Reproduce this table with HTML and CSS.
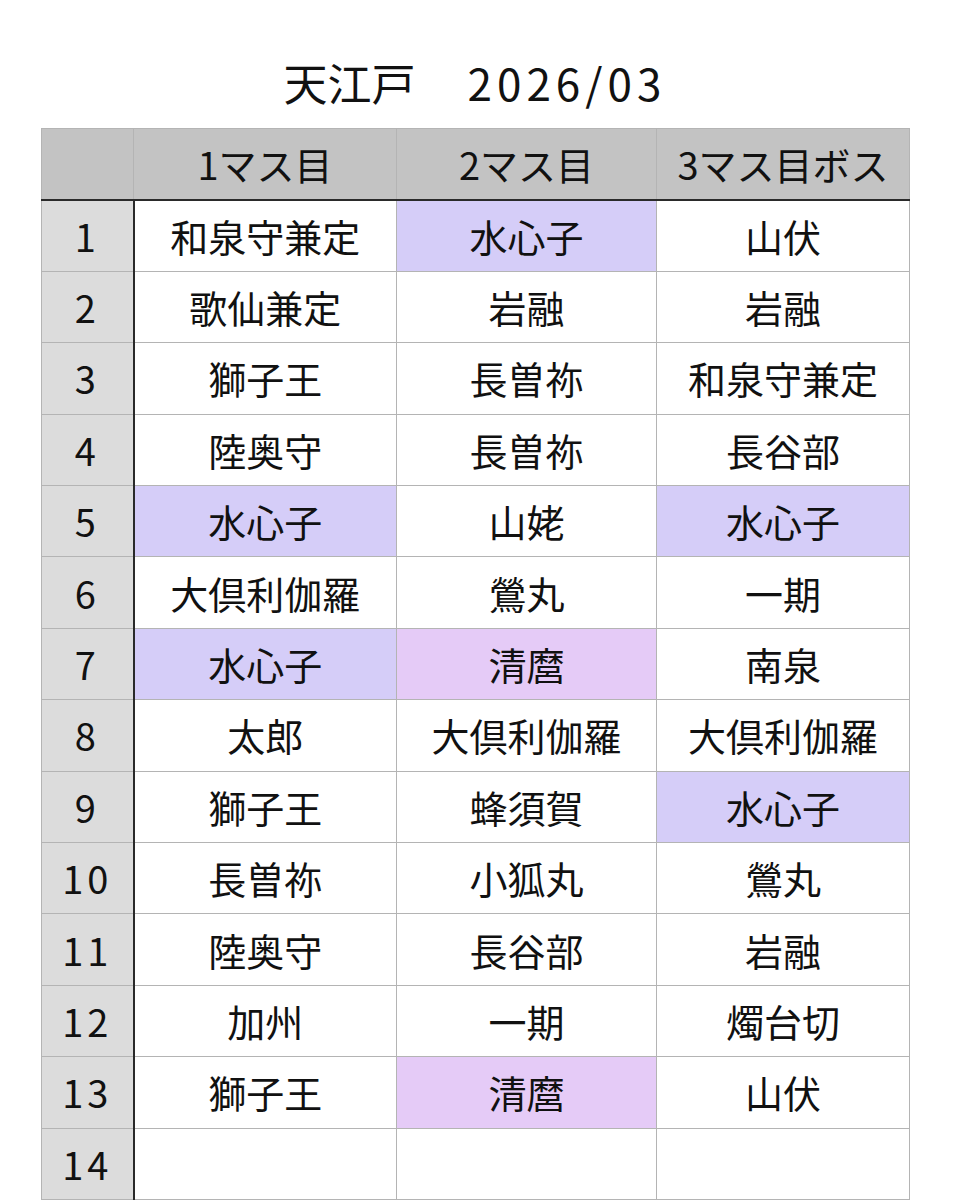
FILE: index.html
```html
<!DOCTYPE html>
<html lang="ja">
<head>
<meta charset="utf-8">
<link rel="stylesheet" href="styles.css">
</head>
<body>
<div class="page">
  <h1 class="title">天江戸　<span class="num">2026/03</span></h1>
  <table class="sheet">
    <colgroup>
      <col class="c-num"><col class="c1"><col class="c2"><col class="c3">
    </colgroup>
    <thead>
      <tr><th class="corner"></th><th>1マス目</th><th>2マス目</th><th>3マス目ボス</th></tr>
    </thead>
    <tbody>
      <tr><th>1</th><td>和泉守兼定</td><td class="hl-a">水心子</td><td>山伏</td></tr>
      <tr><th>2</th><td>歌仙兼定</td><td>岩融</td><td>岩融</td></tr>
      <tr><th>3</th><td>獅子王</td><td>長曽祢</td><td>和泉守兼定</td></tr>
      <tr><th>4</th><td>陸奥守</td><td>長曽祢</td><td>長谷部</td></tr>
      <tr><th>5</th><td class="hl-a">水心子</td><td>山姥</td><td class="hl-a">水心子</td></tr>
      <tr><th>6</th><td>大倶利伽羅</td><td>鶯丸</td><td>一期</td></tr>
      <tr><th>7</th><td class="hl-a">水心子</td><td class="hl-b">清麿</td><td>南泉</td></tr>
      <tr><th>8</th><td>太郎</td><td>大倶利伽羅</td><td>大倶利伽羅</td></tr>
      <tr><th>9</th><td>獅子王</td><td>蜂須賀</td><td class="hl-a">水心子</td></tr>
      <tr><th>10</th><td>長曽祢</td><td>小狐丸</td><td>鶯丸</td></tr>
      <tr><th>11</th><td>陸奥守</td><td>長谷部</td><td>岩融</td></tr>
      <tr><th>12</th><td>加州</td><td>一期</td><td>燭台切</td></tr>
      <tr><th>13</th><td>獅子王</td><td class="hl-b">清麿</td><td>山伏</td></tr>
      <tr><th>14</th><td></td><td></td><td></td></tr>
    </tbody>
  </table>
</div>
</body>
</html>
```

FILE: styles.css
```css
html, body {
  margin: 0;
  padding: 0;
  background: #ffffff;
}
body {
  font-family: "Noto Sans CJK JP", "Noto Sans", sans-serif;
  color: #111111;
  overflow: hidden;
}
.page {
  width: 960px;
  height: 1200px;
  padding-left: 41px;
  box-sizing: border-box;
}
.title {
  margin: 0;
  width: 868px;
  height: 128px;
  box-sizing: border-box;
  padding-top: 52px;
  text-align: center;
  font-size: 44px;
  font-weight: 400;
  line-height: 60px;
}
.title .num {
  letter-spacing: 5px;
  margin-left: 8px;
}
.sheet {
  border-collapse: collapse;
  table-layout: fixed;
  width: 868px;
}
.c-num { width: 92px; }
.c1 { width: 263px; }
.c2 { width: 260px; }
.c3 { width: 253px; }

.sheet th, .sheet td {
  border: 1px solid #b4b4b4;
  text-align: center;
  vertical-align: middle;
  padding: 0;
  font-size: 38px;
  font-weight: 400;
  line-height: 42px;
}
.sheet thead th {
  background: #c3c3c3;
  height: 70px;
  border-bottom: 2px solid #2a2a2a;
}
.sheet tbody tr {
  height: 71.4px;
}
.sheet tbody th {
  background: #dcdcdc;
  border-right: 2px solid #2a2a2a;
  font-size: 38px;
  letter-spacing: 4px;
  padding-right: 0;
}
.sheet td.hl-a {
  background: #d5cdf8;
}
.sheet td.hl-b {
  background: #e5cbf7;
}
```
